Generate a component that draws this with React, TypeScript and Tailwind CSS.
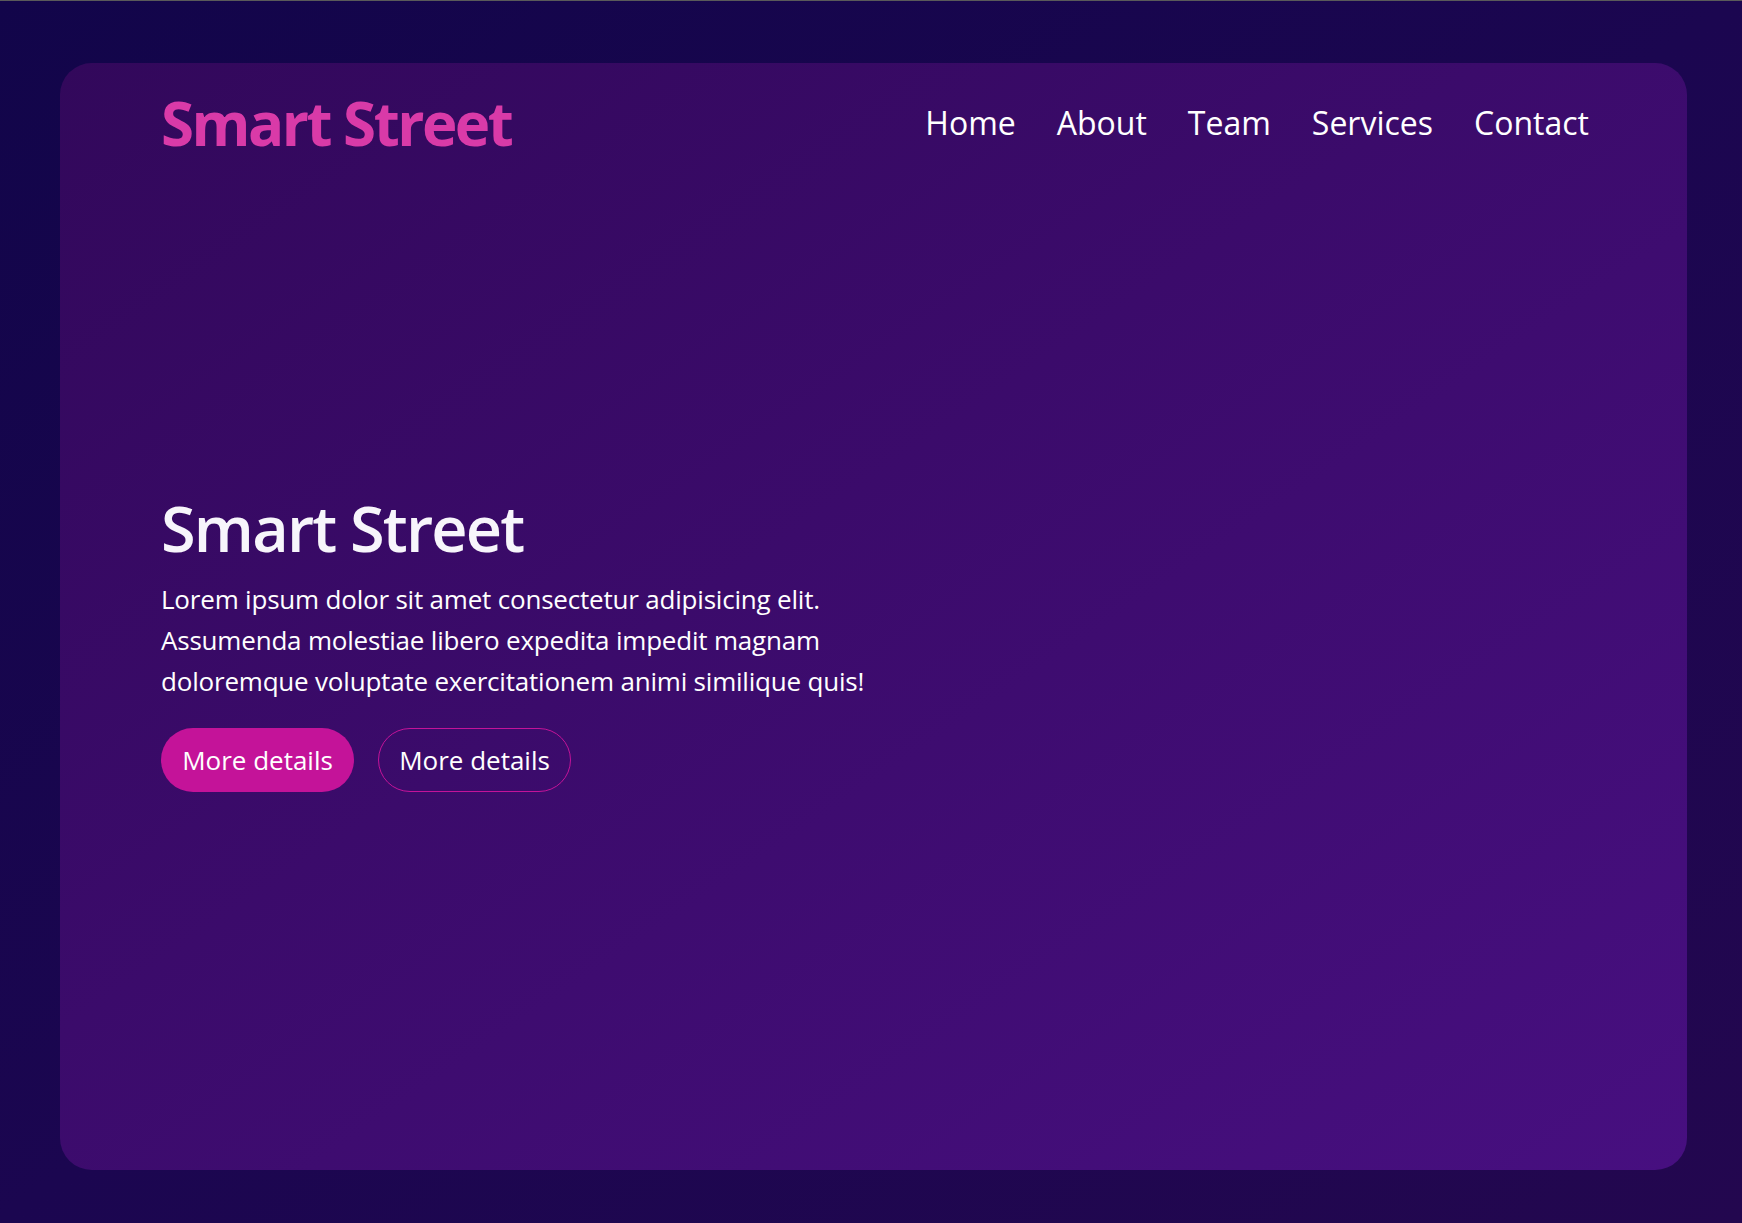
import React from "react";

export default function App() {
  const nav = ["Home", "About", "Team", "Services", "Contact"];
  return (
    <div
      className="w-full h-[1223px] overflow-hidden border-t border-[#5a5a5a] bg-gradient-to-br from-[#12054a] via-[#1b0650] to-[#23074f] pt-[62px] pl-[60px] pr-[55px]"
      style={{ fontFamily: '"Open Sans", "Noto Sans", sans-serif' }}
    >
      <div className="h-[1107px] rounded-[32px] bg-gradient-to-br from-[#32085b] to-[#470f80] pl-[101px] pr-[98px] pt-[30px]">
        <header className="flex items-center justify-between leading-none">
          <div className="text-[60px] font-bold text-[#d93aa8] tracking-[-2.5px]">Smart Street</div>
          <nav className="flex items-center gap-[41px] text-[32px] text-white">
            {nav.map((n) => (
              <a key={n} href="#" className="leading-none">
                {n}
              </a>
            ))}
          </nav>
        </header>
        <section className="mt-[343px]">
          <h1 className="text-[63px] font-semibold leading-none text-[#f7f5fb] tracking-[-1.8px]">Smart Street</h1>
          <p className="mt-[20px] text-[26px] leading-[41px] text-white tracking-[-0.2px]">
            Lorem ipsum dolor sit amet consectetur adipisicing elit.
            <br />
            Assumenda molestiae libero expedita impedit magnam
            <br />
            doloremque voluptate exercitationem animi similique quis!
          </p>
          <div className="mt-[26px] flex gap-[24px]">
            <button className="h-[64px] w-[193px] rounded-full bg-[#c41399] text-[26px] text-white">
              More details
            </button>
            <button className="h-[64px] w-[193px] rounded-full border border-[#c41399] text-[26px] text-white">
              More details
            </button>
          </div>
        </section>
      </div>
    </div>
  );
}
